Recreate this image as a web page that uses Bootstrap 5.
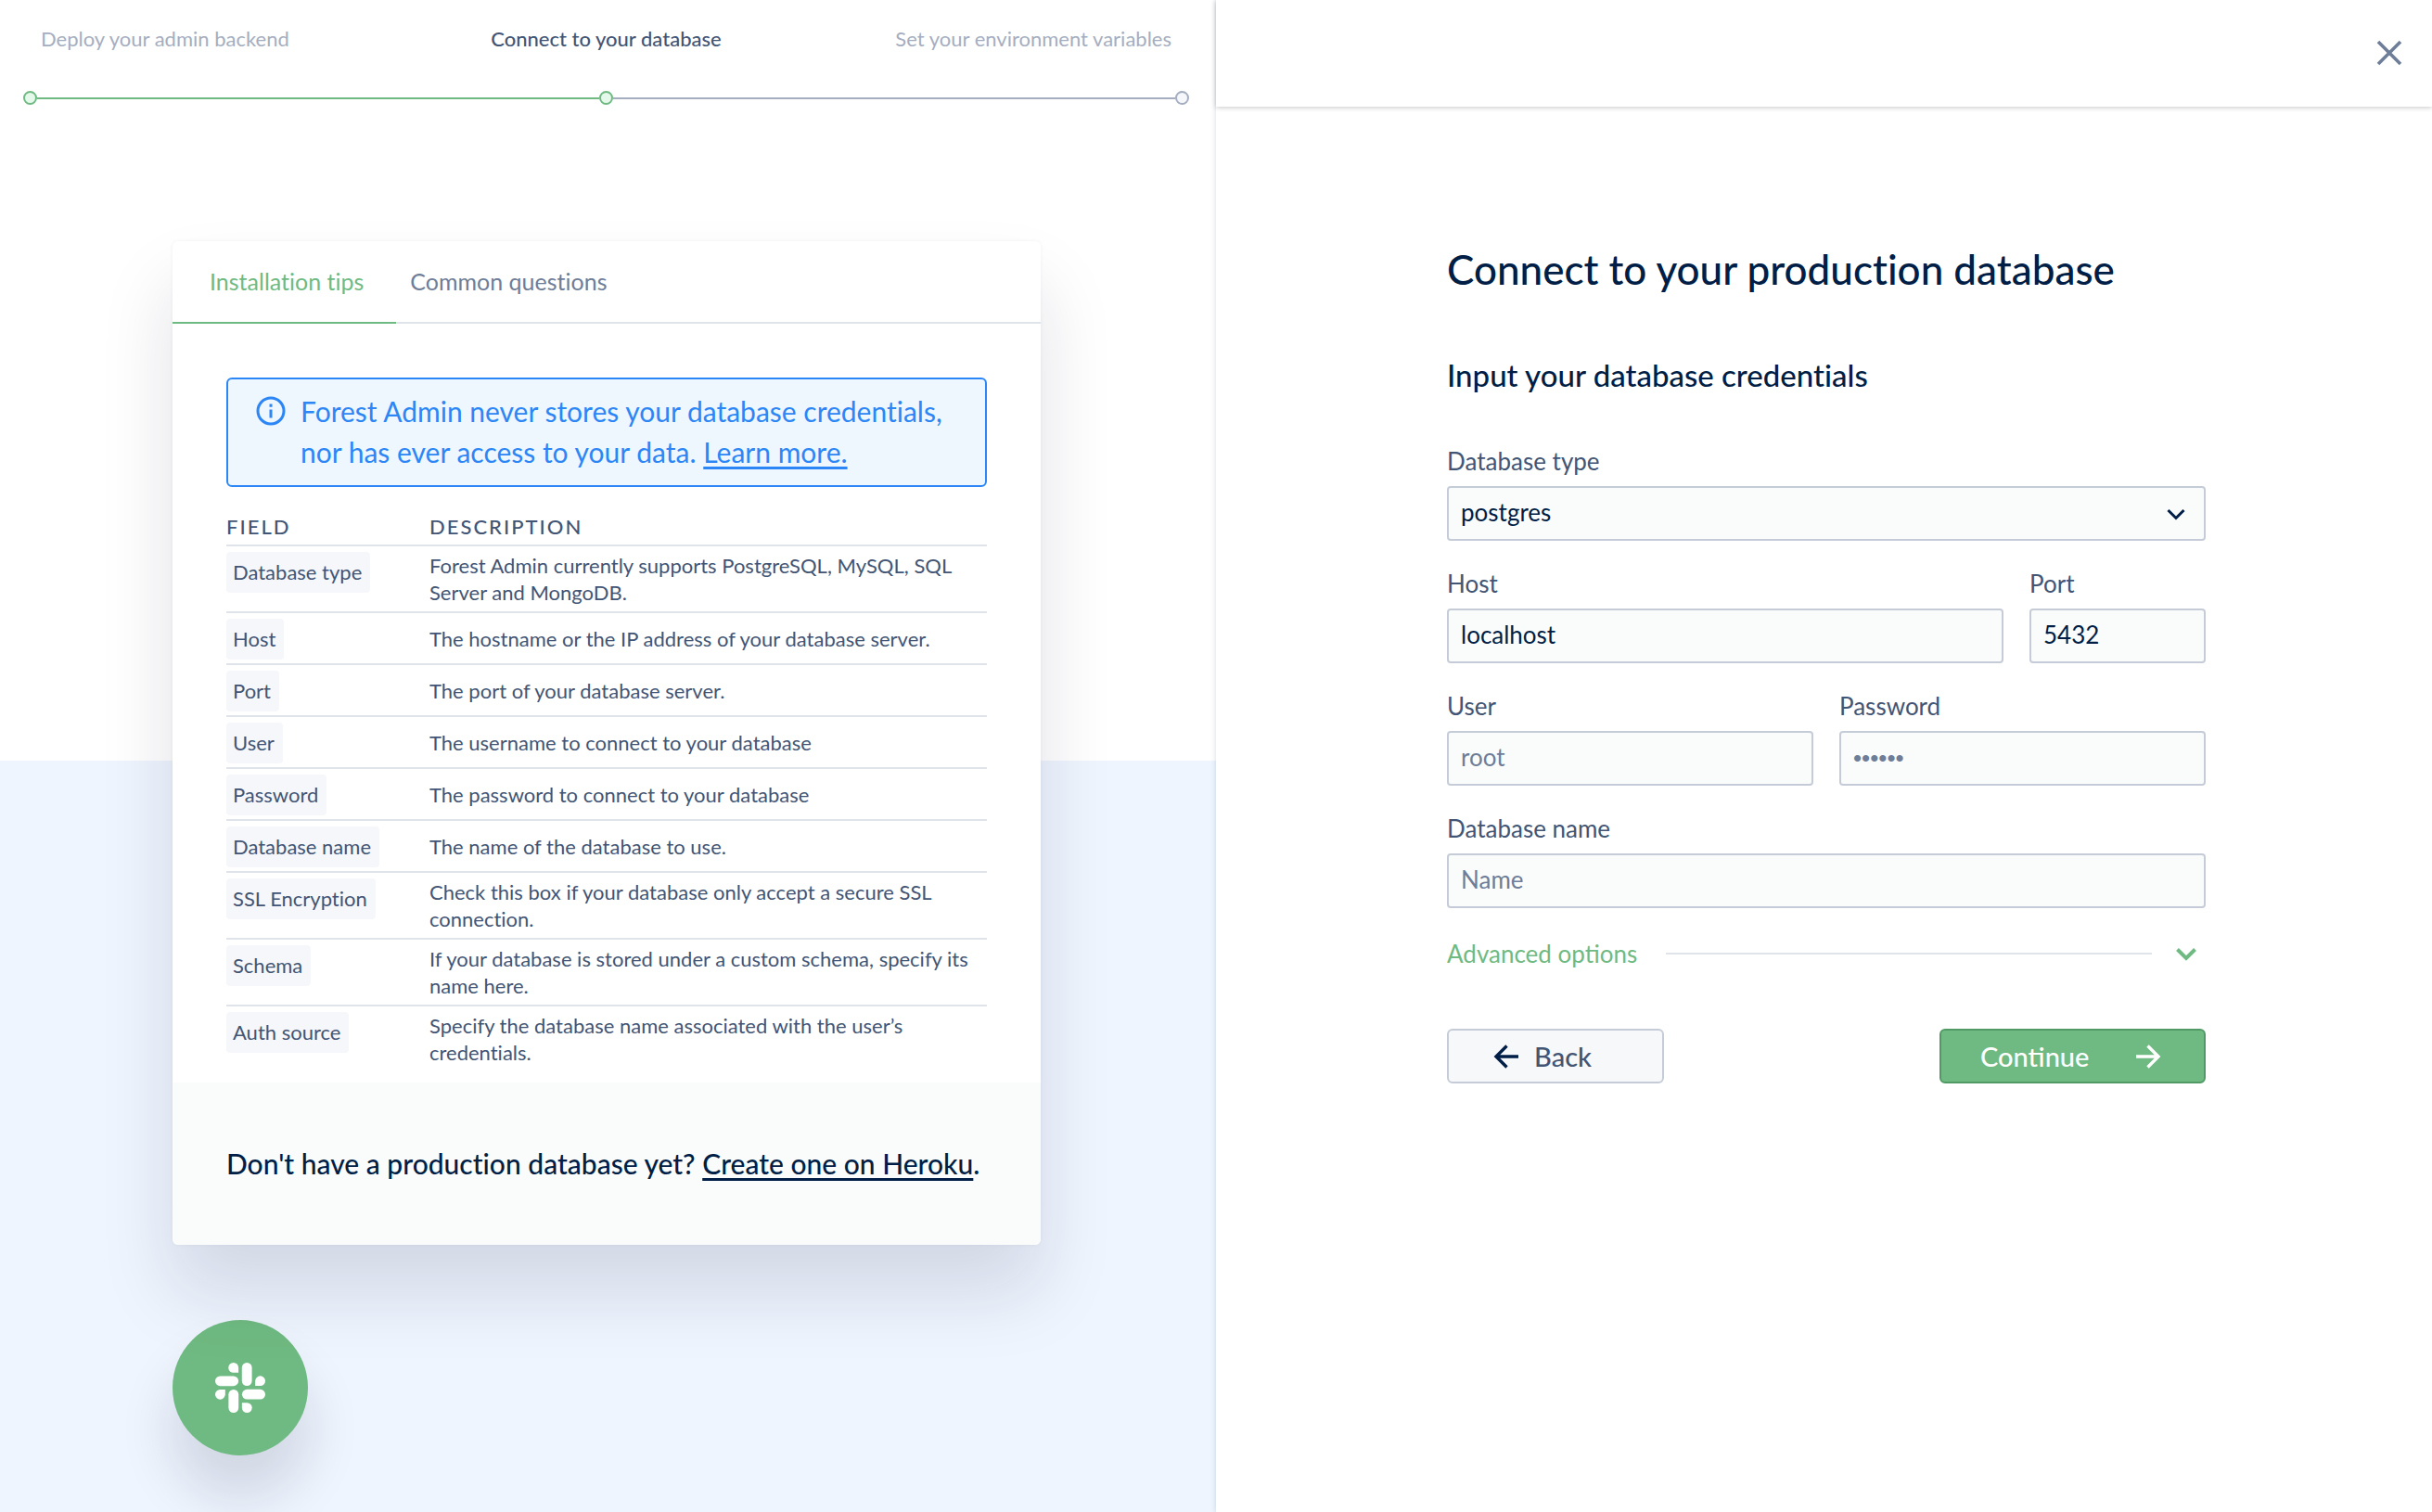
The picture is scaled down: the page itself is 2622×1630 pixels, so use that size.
<!DOCTYPE html>
<html lang="en">
<head>
<meta charset="utf-8">
<meta name="viewport" content="width=device-width, initial-scale=1">
<title>Connect to your production database</title>
<link href="https://cdn.jsdelivr.net/npm/bootstrap@5.3.0/dist/css/bootstrap.min.css" rel="stylesheet">
<style>
:root { --navy:#001e46; --slate:#425575; --muted:#6e7d98; --pale:#a5aec0; --green:#6fba82; --line:#dfe4ea; --sky:#eef5fe; --blue:#2c86f5; }
body { font-family: Lato, "Open Sans", sans-serif; font-variant-ligatures: none; color: var(--slate); background: #fff; min-height: 100vh; }
.side-left { background: linear-gradient(#fff 0 820px, var(--sky) 820px); }
.side-right { box-shadow: 0 0 6px rgba(0,30,60,.16); background: #fff; position: relative; }
.steps { padding: 24px 48px 0 44px; font-size: 22px; line-height: 36px; color: var(--pale); }
.steps span { flex: 1 1 0; }
.steps .current { color: var(--slate); font-weight: 500; }
.track { margin: 38px 29px 0 25px; height: 15px; }
.dot { width: 15px; height: 15px; border: 2px solid var(--green); background: #e4f9ea; border-radius: 50%; }
.dot.todo { border-color: var(--pale); background: #f5f7fa; }
.seg { height: 2px; background: var(--green); }
.seg.todo { background: var(--pale); }
.tips { margin: 147px 189px 0 186px; border: 0; border-radius: 6px; box-shadow: 0 50px 80px rgba(20,20,60,.13), 0 0 4px rgba(0,20,50,.05); }
.tips .nav { border-bottom: 2px solid var(--line); height: 89px; }
.tips .nav-link { color: var(--muted); font-size: 25px; line-height: 32px; padding: 27px 24px 27px 15px; border: 0; border-bottom: 2px solid transparent; border-radius: 0; height: 89px; }
.tips .nav-link.active { color: var(--green); border-color: var(--green); padding: 27px 35px 27px 40px; }
.tips .inner { padding: 58px 58px 12px; }
.note { border: 2px solid var(--blue); background: #eef6fe; border-radius: 6px; color: var(--blue); font-size: 30px; line-height: 44px; padding: 12px 28px 14px 30px; height: 118px; white-space: nowrap; margin-bottom: 28px; }
.note a, .heroku a { color: inherit; text-underline-offset: 4px; }
.fields { margin: 0; color: var(--slate); font-size: 22px; line-height: 29px; --bs-table-bg: transparent; }
.fields th { font-weight: 500; font-size: 22px; letter-spacing: 2px; padding: 0 0 5px; color: var(--slate); border-color: var(--line); border-width: 0 0 2px; }
.fields td { padding: 6px 0; border-color: var(--line); border-width: 0 0 2px; color: var(--slate); vertical-align: middle; }
.fields tr:last-child td { border: 0; }
.fields td:first-child { vertical-align: top; width: 219px; padding-bottom: 4px; }
.tag { display: inline-block; background: #f6f7fa; border-radius: 4px; padding: 7px 9px 8px 7px; vertical-align: top; }
.heroku { background: #fafcfb; border-radius: 0 0 6px 6px; color: var(--navy); font-size: 30px; line-height: 44px; font-weight: 500; padding: 65px 40px 66px 58px; white-space: nowrap; }
.chat { width: 146px; height: 146px; border: 0; border-radius: 50%; background: var(--green); margin: 81px 0 0 186px; box-shadow: 0 44px 60px rgba(20,20,60,.14); }
.topbar { height: 115px; padding: 0 31px 2px; box-shadow: 0 1px 5px rgba(0,0,0,.22); }
.setup { margin: 145px 244px 0 249px; }
.setup h1 { font-size: 44px; line-height: 60px; color: var(--navy); font-weight: 500; margin: 0 0 62px; }
.setup h2 { font-size: 33px; line-height: 44px; color: var(--navy); font-weight: 500; margin: 0 0 53px; }
.setup label { font-size: 26px; line-height: 36px; margin-bottom: 9px; color: var(--slate); display: block; }
.field-box { margin-bottom: 28px; }
.setup .form-control, .setup .form-select { height: 59px; border: 2px solid #c6ccd7; border-radius: 4px; background-color: #fafcfb; color: var(--navy); font-size: 26px; line-height: 36px; padding: 0 13px 3px; }
.setup .form-select { background-image: url("data:image/svg+xml,%3Csvg xmlns='http://www.w3.org/2000/svg' viewBox='0 0 20 20'%3E%3Cpath d='M1.500 6 10 14.500l8.500-8.500' fill='none' stroke='%23001e46' stroke-width='3'/%3E%3C/svg%3E"); background-size: 20px 20px; background-position: right 20px center; }
.setup .form-control::placeholder { color: var(--muted); opacity: 1; }
.setup .secret::placeholder { font-family: "Liberation Sans", sans-serif; }
.port-col { width: 190px; }
.advanced { border: 0; background: none; padding: 0; color: var(--green); font-size: 26px; line-height: 36px; width: 100%; margin: 31px 0 63px; }
.advanced .rule { height: 2px; background: var(--line); margin: 0 24px 0 31px; }
.act { height: 59px; font-size: 29px; line-height: 40px; border: 2px solid #c6ccd7; border-radius: 6px; padding: 0; font-weight: 500; }
.act-back { width: 234px; background: #f7f8fa; color: var(--slate); padding-right: 12px; }
.act-next { width: 287px; background: var(--green); color: #fff; border-color: #519a65; padding: 0 46px 0 42px; }
</style>
<script src="https://cdn.jsdelivr.net/npm/bootstrap@5.3.0/dist/js/bootstrap.bundle.min.js"></script>
</head>
<body>
<div class="row g-0 min-vh-100">
  <section class="col-6 side-left">
    <div class="steps d-flex">
      <span>Deploy your admin backend</span><span class="current text-center">Connect to your database</span><span class="text-end">Set your environment variables</span>
    </div>
    <div class="track d-flex align-items-center">
      <span class="dot flex-shrink-0"></span><span class="seg flex-fill"></span><span class="dot flex-shrink-0"></span><span class="seg todo flex-fill"></span><span class="dot todo flex-shrink-0"></span>
    </div>
    <div class="card tips">
      <nav class="nav">
        <a class="nav-link active" href="#tips">Installation tips</a>
        <a class="nav-link" href="#questions">Common questions</a>
      </nav>
      <div class="inner" id="tips">
        <div class="note d-flex">
          <svg class="flex-shrink-0 mt-1 me-3" width="32" height="36" viewBox="0 0 32 36" fill="none" stroke="currentColor" stroke-width="3"><circle cx="16" cy="18" r="14"/><path d="M16 16.500v9M16 10.500v3.200"/></svg>
          <div>Forest Admin never stores your database credentials,<br>nor has ever access to your data. <a href="#learn">Learn more.</a></div>
        </div>
        <table class="table fields">
          <thead><tr><th scope="col">FIELD</th><th scope="col">DESCRIPTION</th></tr></thead>
          <tbody>
            <tr><td><span class="tag">Database type</span></td><td>Forest Admin currently supports PostgreSQL, MySQL, SQL<br>Server and MongoDB.</td></tr>
            <tr><td><span class="tag">Host</span></td><td>The hostname or the IP address of your database server.</td></tr>
            <tr><td><span class="tag">Port</span></td><td>The port of your database server.</td></tr>
            <tr><td><span class="tag">User</span></td><td>The username to connect to your database</td></tr>
            <tr><td><span class="tag">Password</span></td><td>The password to connect to your database</td></tr>
            <tr><td><span class="tag">Database name</span></td><td>The name of the database to use.</td></tr>
            <tr><td><span class="tag">SSL Encryption</span></td><td>Check this box if your database only accept a secure SSL<br>connection.</td></tr>
            <tr><td><span class="tag">Schema</span></td><td>If your database is stored under a custom schema, specify its<br>name here.</td></tr>
            <tr><td><span class="tag">Auth source</span></td><td>Specify the database name associated with the user’s<br>credentials.</td></tr>
          </tbody>
        </table>
      </div>
      <div class="heroku">Don't have a production database yet? <a href="#heroku">Create one on Heroku</a>.</div>
    </div>
    <button class="chat d-flex align-items-center justify-content-center" type="button" aria-label="Slack">
      <svg width="54" height="54" viewBox="0 0 54 54" fill="#fff"><g id="arm"><path d="M19.700 0a5.400 5.400 0 0 0 0 10.800h5.400V5.400A5.400 5.400 0 0 0 19.700 0z"/><rect y="14.400" width="25.100" height="10.800" rx="5.400"/></g><use href="#arm" transform="rotate(90 27 27)"/><use href="#arm" transform="rotate(180 27 27)"/><use href="#arm" transform="rotate(270 27 27)"/></svg>
    </button>
  </section>
  <main class="col-6 side-right">
    <header class="topbar d-flex align-items-center justify-content-end">
      <button type="button" class="btn p-0 border-0 d-flex" aria-label="Close"><svg width="30" height="30" viewBox="0 0 30 30" fill="none" stroke="#6e7d98" stroke-width="3.600"><path d="M3 3l24 24M27 3 3 27"/></svg></button>
    </header>
    <form class="setup">
      <h1>Connect to your production database</h1>
      <h2>Input your database credentials</h2>
      <div class="field-box"><label for="dbtype">Database type</label><select id="dbtype" class="form-select"><option>postgres</option><option>mysql</option></select></div>
      <div class="d-flex field-box">
        <div class="flex-fill me-4 pe-1"><label for="host">Host</label><input id="host" class="form-control" value="localhost"></div>
        <div class="port-col"><label for="port">Port</label><input id="port" class="form-control" value="5432"></div>
      </div>
      <div class="d-flex field-box">
        <div class="flex-fill me-4 pe-1"><label for="user">User</label><input id="user" class="form-control" placeholder="root"></div>
        <div class="flex-fill"><label for="pass">Password</label><input id="pass" type="password" class="form-control secret" placeholder="••••••"></div>
      </div>
      <div class="field-box"><label for="dbname">Database name</label><input id="dbname" class="form-control" placeholder="Name"></div>
      <button class="advanced d-flex align-items-center" type="button">Advanced options<span class="rule flex-fill"></span>
        <svg class="me-2" width="26" height="26" viewBox="0 0 26 26" fill="none" stroke="currentColor" stroke-width="4"><path d="M3.500 8.500 13 18l9.500-9.500"/></svg></button>
      <div class="d-flex justify-content-between">
        <button type="button" class="btn act act-back d-flex align-items-center justify-content-center"><svg class="me-3" width="28" height="28" viewBox="0 0 28 28" fill="none" stroke="#001e46" stroke-width="3.400"><path d="M27 14H4M14.500 2.500 3 14l11.500 11.500"/></svg><span class="pe-3">Back</span></button>
        <button type="submit" class="btn act act-next d-flex align-items-center justify-content-between">Continue<svg width="28" height="28" viewBox="0 0 28 28" fill="none" stroke="#fff" stroke-width="3.400"><path d="M1 14h23M13.500 2.500 25 14 13.500 25.500"/></svg></button>
      </div>
    </form>
  </main>
</div>
</body>
</html>
